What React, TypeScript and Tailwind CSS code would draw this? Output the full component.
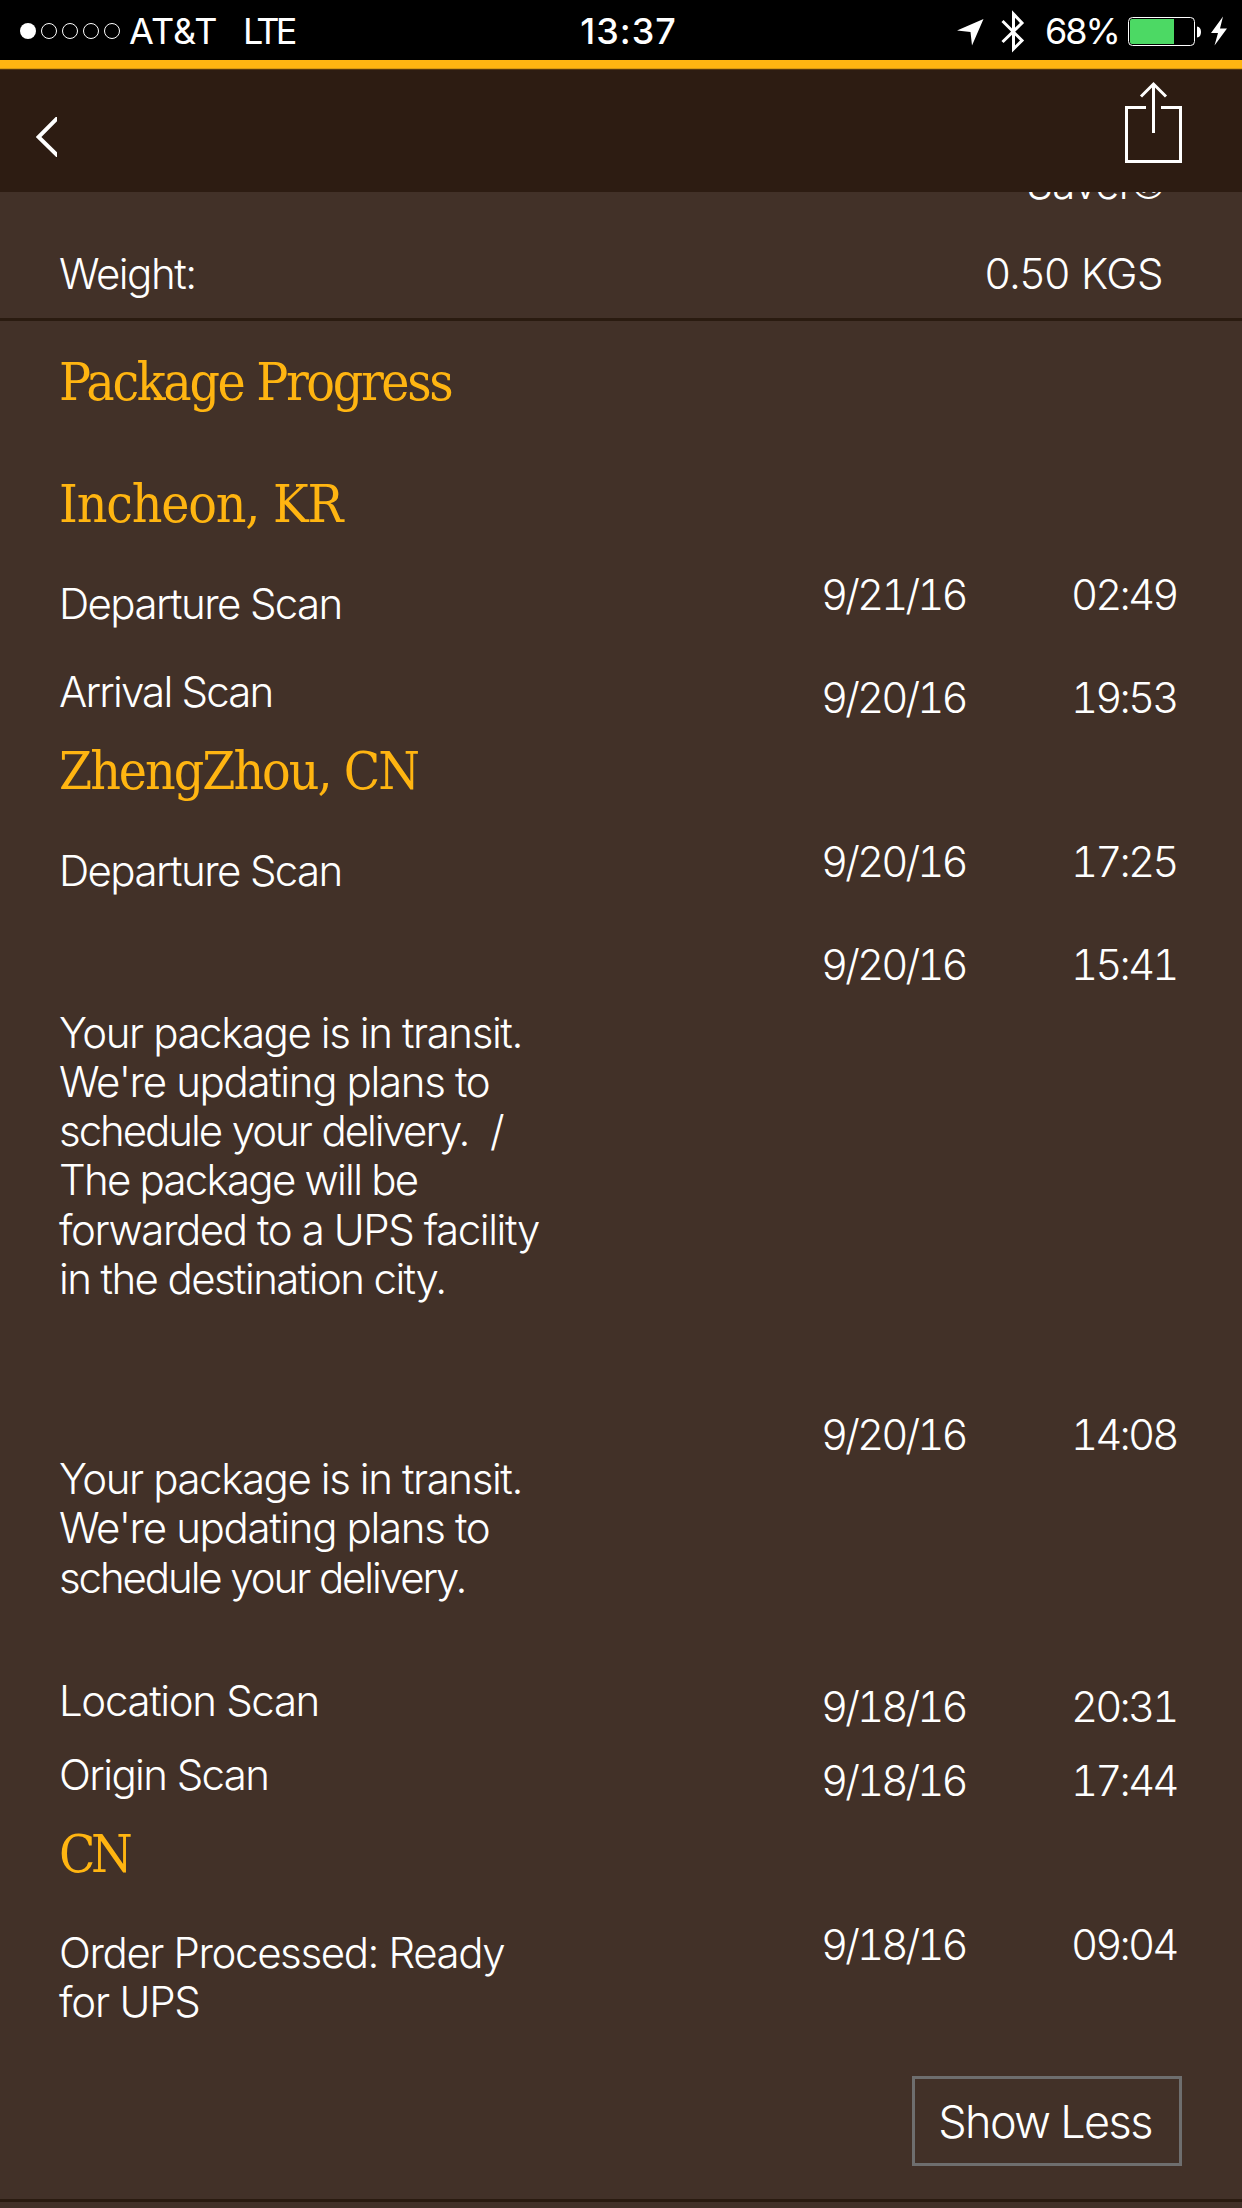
import React from "react";

type Line = {
  text: string;
  spacing: string;
};

type Scan = {
  lines: Line[];
  date: string;
  time: string;
  row: string;
  labelPad: string;
  datePad: string;
};

type Stop = {
  place: string;
  spacing: string;
  scans: Scan[];
};

const stops: Stop[] = [
  {
    place: "Incheon, KR",
    spacing: "tracking-[-1.200px]",
    scans: [
      {
        lines: [{ text: "Departure Scan", spacing: "tracking-[-1.600px]" }],
        date: "9/21/16",
        time: "02:49",
        row: "h-[122px]",
        labelPad: "pt-[41px]",
        datePad: "pt-[32px]",
      },
      {
        lines: [{ text: "Arrival Scan", spacing: "tracking-[-1.800px]" }],
        date: "9/20/16",
        time: "19:53",
        row: "h-[75px]",
        labelPad: "pt-[7px]",
        datePad: "pt-[13px]",
      },
    ],
  },
  {
    place: "ZhengZhou, CN",
    spacing: "tracking-[-2px]",
    scans: [
      {
        lines: [{ text: "Departure Scan", spacing: "tracking-[-1.600px]" }],
        date: "9/20/16",
        time: "17:25",
        row: "h-[122px]",
        labelPad: "pt-[41px]",
        datePad: "pt-[32px]",
      },
      {
        lines: [
          { text: "Your package is in transit.", spacing: "tracking-[-1.420px]" },
          { text: "We're updating plans to", spacing: "tracking-[-1.340px]" },
          { text: "schedule your delivery.  /", spacing: "tracking-[-2.050px] [word-spacing:1px]" },
          { text: "The package will be", spacing: "tracking-[-1.750px]" },
          { text: "forwarded to a UPS facility", spacing: "tracking-[-1.420px]" },
          { text: "in the destination city.", spacing: "tracking-[-1.600px]" },
        ],
        date: "9/20/16",
        time: "15:41",
        row: "h-[470px]",
        labelPad: "pt-[80.500px]",
        datePad: "pt-[13px]",
      },
      {
        lines: [
          { text: "Your package is in transit.", spacing: "tracking-[-1.420px]" },
          { text: "We're updating plans to", spacing: "tracking-[-1.340px]" },
          { text: "schedule your delivery.", spacing: "tracking-[-2.100px]" },
        ],
        date: "9/20/16",
        time: "14:08",
        row: "h-[272px]",
        labelPad: "pt-[57px]",
        datePad: "pt-[13px]",
      },
      {
        lines: [{ text: "Location Scan", spacing: "tracking-[-1.350px]" }],
        date: "9/18/16",
        time: "20:31",
        row: "h-[74px]",
        labelPad: "pt-[7px]",
        datePad: "pt-[13px]",
      },
      {
        lines: [{ text: "Origin Scan", spacing: "tracking-[-1.600px]" }],
        date: "9/18/16",
        time: "17:44",
        row: "h-[75px]",
        labelPad: "pt-[7px]",
        datePad: "pt-[13px]",
      },
    ],
  },
  {
    place: "CN",
    spacing: "tracking-[-4.500px]",
    scans: [
      {
        lines: [
          { text: "Order Processed: Ready", spacing: "tracking-[-1.380px]" },
          { text: "for UPS", spacing: "tracking-[-1.200px]" },
        ],
        date: "9/18/16",
        time: "09:04",
        row: "h-[188px]",
        labelPad: "pt-[39.500px]",
        datePad: "pt-[32px]",
      },
    ],
  },
];

const StatusBar = () => {
  return (
    <div className="grid grid-cols-3 h-[60px] bg-black text-white text-[36px] leading-[62px]">
      <div className="flex items-center pl-[20px]">
        <svg width="100" height="60" viewBox="0 0 100 60" fill="none" stroke="white">
          <circle cx="8" cy="30" r="8" fill="white" stroke="none" />
          <circle cx="29" cy="30" r="7.5" />
          <circle cx="50" cy="30" r="7.5" />
          <circle cx="71" cy="30" r="7.5" />
          <circle cx="92" cy="30" r="7.5" />
        </svg>
        <span className="ml-[9px] w-[114px] tracking-[0.100px] whitespace-nowrap">AT&amp;T</span>
        <span className="tracking-[-3.700px]">LTE</span>
      </div>
      <div className="pl-[15px] text-center font-medium tracking-[1px]">13:37</div>
      <div className="flex items-center justify-end pr-[14px]">
        <svg width="28" height="60" viewBox="0 0 28 60" fill="white">
          <path d="M27.500 18L16 44.500L14.500 31L1 29.500Z" />
        </svg>
        <svg className="ml-[17px]" width="24" height="60" viewBox="0 0 24 60" fill="none" stroke="white" strokeWidth="3">
          <path d="M1.500 20L21 39.500L12.500 48V13L21 22L1.500 41" />
        </svg>
        <span className="ml-[20px] w-[83px] tracking-[-2px] whitespace-nowrap">68%</span>
        <svg width="100" height="60" viewBox="1128 0 100 60">
          <rect x="1128.500" y="16.500" width="66" height="28" rx="4" fill="none" stroke="white" />
          <path d="M1132 18H1174V43H1132Q1130 43 1130 41V20Q1130 18 1132 18Z" fill="#4cd964" />
          <path d="M1197 25.500Q1201 26 1201 31Q1201 36 1197 36.500Z" fill="white" />
          <path d="M1223 15.500L1211 32H1218L1214.500 44.500L1227 27.500H1220Z" fill="white" />
        </svg>
      </div>
    </div>
  );
};

const Header = () => {
  return (
    <div>
      <div className="h-[9px] border-b border-[#d99a12] bg-[#ffb511]" />
      <div className="flex justify-between h-[123px] border-t border-[#5a390f] bg-[#2d1c12]">
        <button className="ml-[36px] mt-[47px] h-[40px]">
          <svg width="21" height="40" viewBox="0 0 21 40" fill="none" stroke="white" strokeWidth="4">
            <path d="M22.500 0L2.500 20L22.500 39.500" />
          </svg>
        </button>
        <button className="mr-[60px] mt-[11px] h-[82px]">
          <svg width="57" height="82" viewBox="0 0 57 82" fill="none" stroke="white" strokeWidth="3">
            <path d="M21 26.500H1.500V80.500H55.500V26.500H36M28.500 52V3M16 15.500L28.500 3L41 15.500" />
          </svg>
        </button>
      </div>
    </div>
  );
};

const App = () => {
  return (
    <div className="w-[1242px] h-[2208px] overflow-hidden bg-[#423128] font-['Inter','Liberation_Sans',sans-serif]">
      <StatusBar />
      <Header />
      <div className="text-white text-[42px] font-light leading-[49.330px]">
        {/* scrolled part of the details list, tucked under the header */}
        <div className="h-[129px] overflow-hidden border-b-[3px] border-[#2a1b10] pl-[59px] pr-[79px]">
          <div className="-mt-[33px] h-[90px] text-right tracking-[-0.900px]">
            Saver<span className="font-['Liberation_Sans',sans-serif]">®</span>
          </div>
          <div className="flex justify-between">
            <span className="tracking-[-1.500px]">Weight:</span>
            <span className="tracking-[-0.500px]">0.50 KGS</span>
          </div>
        </div>
        <div className="pt-[25px] pl-[59px] pr-[60px]">
          <h1 className="h-[122px] font-['DejaVu_Serif_Condensed','DejaVu_Serif',serif] font-normal text-[53px] leading-[72px] tracking-[-2.350px] text-[#ffb511]">
            Package Progress
          </h1>
          {stops.map((stop) => (
            <div key={stop.place}>
              <h2
                className={`h-[70px] font-['DejaVu_Serif_Condensed','DejaVu_Serif',serif] font-normal text-[53px] leading-[72px] text-[#ffb511] ${stop.spacing}`}
              >
                {stop.place}
              </h2>
              {stop.scans.map((scan) => (
                <div key={scan.date + scan.time} className={`flex ${scan.row}`}>
                  <div className={`w-[762px] whitespace-pre ${scan.labelPad}`}>
                    {scan.lines.map((line) => (
                      <p key={line.text} className={line.spacing}>
                        {line.text}
                      </p>
                    ))}
                  </div>
                  <p className={`w-[250px] tabular-nums tracking-[-2.900px] ${scan.datePad}`}>{scan.date}</p>
                  <p className={`tabular-nums tracking-[-2.900px] ${scan.datePad}`}>{scan.time}</p>
                </div>
              ))}
            </div>
          ))}
          <div className="flex justify-end">
            <button className="w-[270px] h-[90px] border-[3px] border-[#6e6e6e] pt-[2px] pr-[4px] text-[45px] font-light tracking-[-1.600px]">
              Show Less
            </button>
          </div>
        </div>
        <div className="mt-[33px] h-[3px] bg-[#2a1b10]" />
      </div>
    </div>
  );
};

export default App;
